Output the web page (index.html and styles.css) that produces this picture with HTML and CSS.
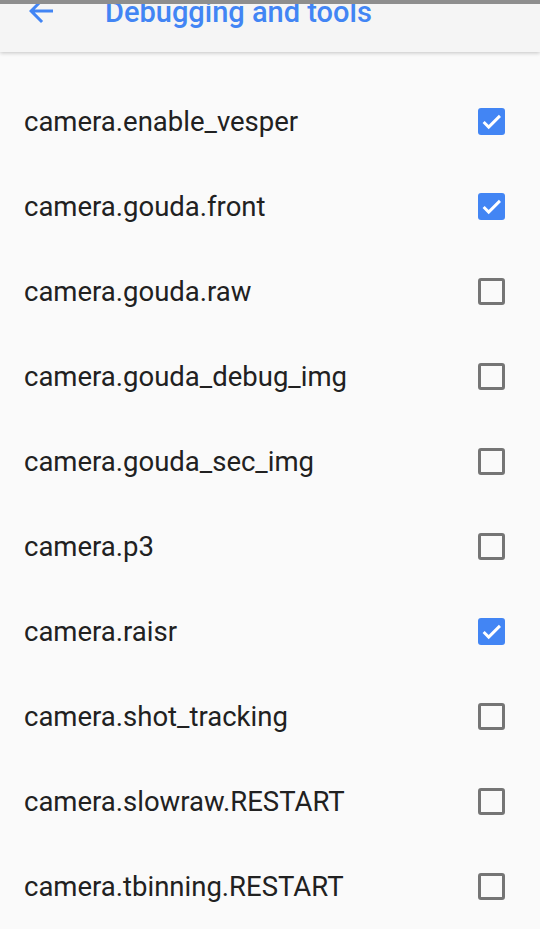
FILE: index.html
```html
<!DOCTYPE html>
<html>
<head>
<meta charset="utf-8">
<link rel="stylesheet" href="styles.css">
</head>
<body>
<div class="status"></div>
<header class="appbar">
  <svg class="back" viewBox="0 0 24 24" width="36" height="36"><path d="M20 11H7.83l5.59-5.59L12 4l-8 8 8 8 1.41-1.41L7.83 13H20v-2z" fill="#4285f4"/></svg>
  <h1 class="title">Debugging and tools</h1>
</header>
<ul class="list">
  <li class="row"><span class="label">camera.enable_vesper</span><span class="cb on"><svg viewBox="0 0 24 24"><path d="M5 12.5l4.5 4.5L19.5 7" fill="none" stroke="#fff" stroke-width="2.6"/></svg></span></li>
  <li class="row"><span class="label">camera.gouda.front</span><span class="cb on"><svg viewBox="0 0 24 24"><path d="M5 12.5l4.5 4.5L19.5 7" fill="none" stroke="#fff" stroke-width="2.6"/></svg></span></li>
  <li class="row"><span class="label">camera.gouda.raw</span><span class="cb"></span></li>
  <li class="row"><span class="label">camera.gouda_debug_img</span><span class="cb"></span></li>
  <li class="row"><span class="label">camera.gouda_sec_img</span><span class="cb"></span></li>
  <li class="row"><span class="label">camera.p3</span><span class="cb"></span></li>
  <li class="row"><span class="label">camera.raisr</span><span class="cb on"><svg viewBox="0 0 24 24"><path d="M5 12.5l4.5 4.5L19.5 7" fill="none" stroke="#fff" stroke-width="2.6"/></svg></span></li>
  <li class="row"><span class="label">camera.shot_tracking</span><span class="cb"></span></li>
  <li class="row"><span class="label">camera.slowraw.RESTART</span><span class="cb"></span></li>
  <li class="row"><span class="label">camera.tbinning.RESTART</span><span class="cb"></span></li>
</ul>
</body>
</html>
```

FILE: styles.css
```css
html, body {
  margin: 0;
  padding: 0;
  background: #fafafa;
  font-family: Roboto, "Noto Sans", sans-serif;
  overflow: hidden;
}
.status {
  position: absolute;
  top: 0;
  left: 0;
  right: 0;
  height: 4px;
  background: #8e8e8e;
  z-index: 2;
}
.appbar {
  position: relative;
  z-index: 1;
  height: 52px;
  background: #f5f5f5;
  box-shadow: 0 1px 4px rgba(0,0,0,0.22);
  display: flex;
  align-items: flex-start;
}
.back {
  margin: -7px 0 0 23px;
  flex: none;
}
.title {
  margin: -6px 0 0 46px;
  font-size: 29px;
  font-weight: 500;
  color: #4285f4;
  line-height: 36px;
  white-space: nowrap;
}
.list {
  list-style: none;
  margin: 0;
  padding: 27px 0 0 0;
}
.row {
  height: 85px;
  display: flex;
  align-items: center;
  justify-content: space-between;
  padding: 0 35px 0 24px;
}
.label {
  font-size: 27.5px;
  color: #212121;
}
.cb {
  width: 27px;
  height: 27px;
  box-sizing: border-box;
  border: 3px solid #757575;
  border-radius: 3px;
  display: flex;
}
.cb.on {
  background: #4285f4;
  border: none;
}
.cb svg {
  width: 27px;
  height: 27px;
}
```
